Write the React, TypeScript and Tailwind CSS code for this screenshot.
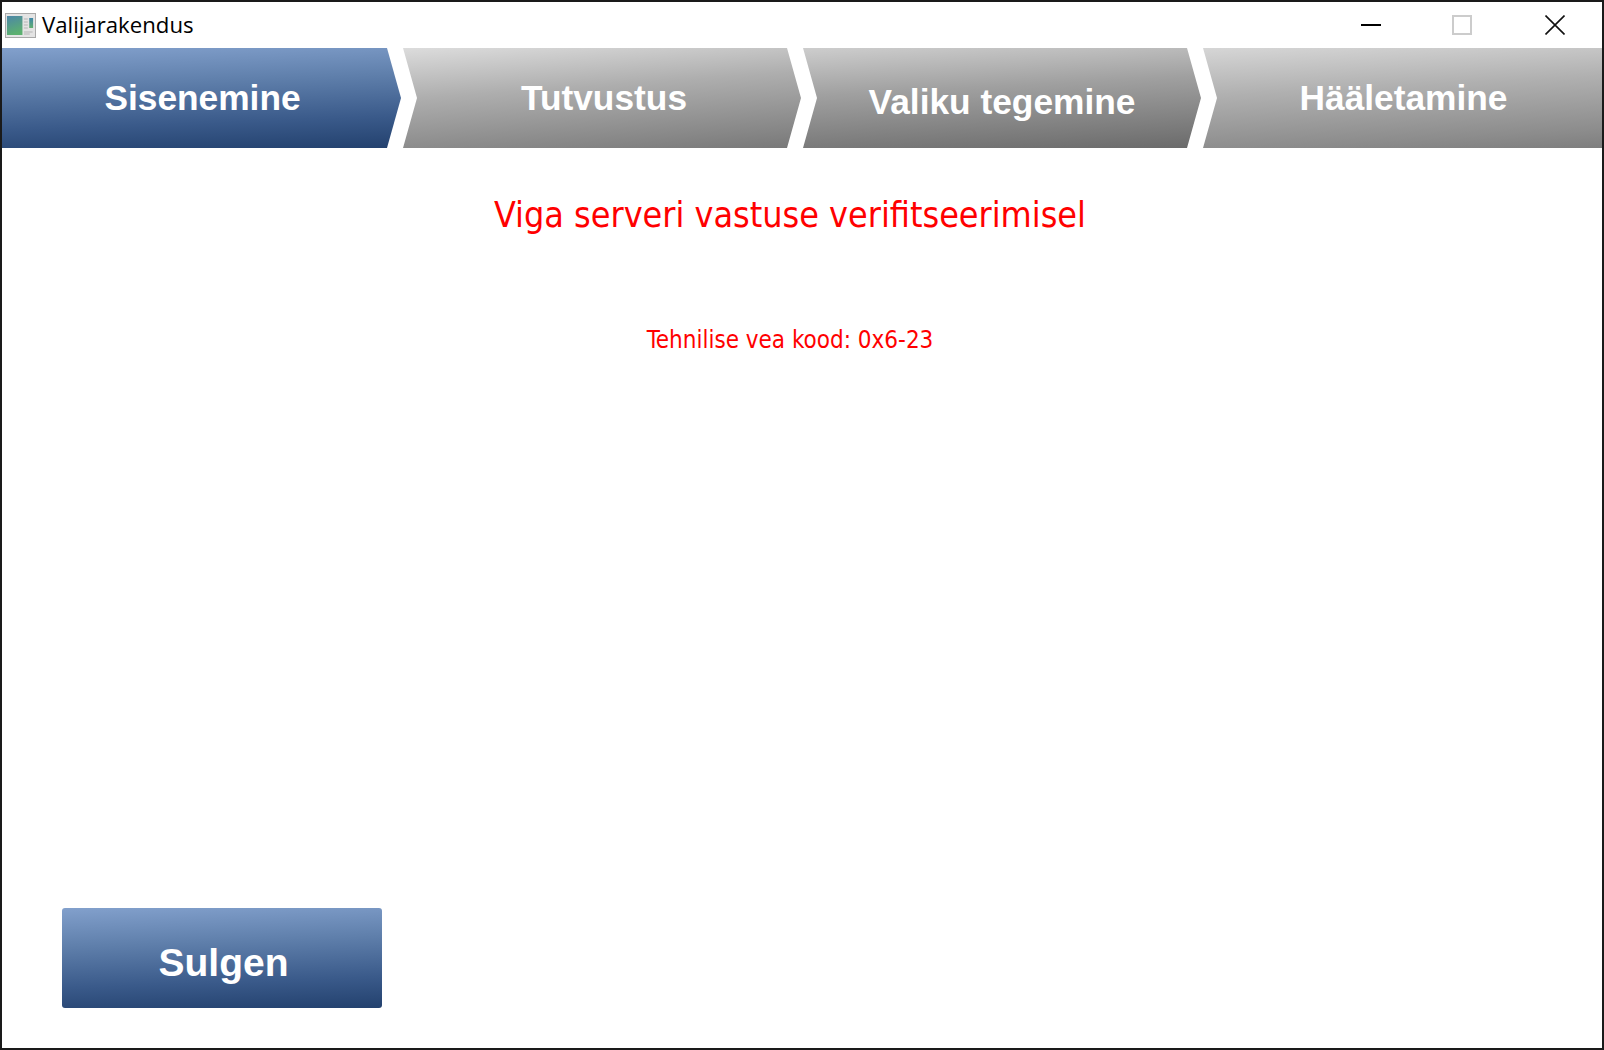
const BLUE = "bg-[linear-gradient(178deg,#82a0cc_0%,#5f7fab_35%,#3a5a8a_72%,#23416e_100%)]";

const AppIcon = () => (
  <svg width="31" height="25" viewBox="0 0 32 25" preserveAspectRatio="none" className="shrink-0">
    <rect x="0.5" y="0.5" width="31" height="24" fill="#e4e4e4" stroke="#a8a8a8" />
    <defs>
      <linearGradient id="pane" x1="0" y1="0" x2="0.3" y2="1">
        <stop offset="0" stopColor="#4c86a8" />
        <stop offset="1" stopColor="#5cb070" />
      </linearGradient>
      <linearGradient id="side" x1="0" y1="0" x2="0" y2="1">
        <stop offset="0" stopColor="#3f86a8" />
        <stop offset="1" stopColor="#62b070" />
      </linearGradient>
    </defs>
    <rect x="2" y="3" width="16" height="19" fill="url(#pane)" />
    <rect x="25" y="5" width="4" height="10" fill="url(#side)" />
    <path d="M19.5 6h4M19.5 9h4M19.5 12h4M19.5 15h4M19.5 19h9M19.5 21h6" stroke="#b4b4b4" strokeWidth="1" />
  </svg>
);

const TitleBar = () => (
  <div className="flex h-[46px] shrink-0 items-center pl-[3px]">
    <AppIcon />
    <span className="ml-[6px] font-['Open_Sans',sans-serif] text-[22.2px] leading-none text-black">
      Valijarakendus
    </span>
    <div className="ml-auto flex items-center pr-[37px]">
      <div className="h-[2px] w-5 bg-black" />
      <div className="ml-[71px] h-5 w-5 border-2 border-[#cccccc]" />
      <svg width="20" height="20" viewBox="0 0 20 20" className="ml-[73px]">
        <path d="M0.5 0.5L19.5 19.5M19.5 0.5L0.5 19.5" stroke="#111" strokeWidth="1.6" />
      </svg>
    </div>
  </div>
);

const Tabs = () => (
  <div className="flex h-[100px] shrink-0 gap-[2px] font-['Liberation_Sans',Arial,sans-serif] text-[35.3px] font-bold text-white">
    <div className={`flex w-[399px] items-center justify-center pl-[2px] ${BLUE} [clip-path:polygon(0_0,385px_0,399px_50%,385px_100%,0_100%)]`}>
      Sisenemine
    </div>
    <div className="flex w-[398px] items-center justify-center bg-[linear-gradient(176deg,#dcdcdc_0%,#aeaeae_40%,#868686_85%,#787878_100%)] pl-1 [clip-path:polygon(0_0,384px_0,398px_50%,384px_100%,0_100%,14px_50%)]">
      Tutvustus
    </div>
    <div className="flex w-[398px] items-center justify-center bg-[linear-gradient(177deg,#cdcdcd_0%,#a0a0a0_40%,#787878_85%,#6a6a6a_100%)] pt-2 [clip-path:polygon(0_0,384px_0,398px_50%,384px_100%,0_100%,14px_50%)]">
      Valiku tegemine
    </div>
    <div className="flex flex-1 items-center justify-center bg-[linear-gradient(177deg,#d6d6d6_0%,#b0b0b0_40%,#8c8c8c_85%,#7e7e7e_100%)] pl-[2px] [clip-path:polygon(0_0,100%_0,100%_100%,0_100%,14px_50%)]">
      Hääletamine
    </div>
  </div>
);

export default function App() {
  return (
    <div className="flex h-[1050px] w-[1604px] flex-col overflow-hidden border-2 border-[#1a1a1a] bg-white">
      <TitleBar />
      <Tabs />
      <div className="flex flex-col items-center pt-[46px] pr-6 font-['DejaVu_Sans',Verdana,sans-serif] text-[#ff0000] [font-stretch:condensed]">
        <h1 className="text-[35.6px] leading-[42px]">Viga serveri vastuse verifitseerimisel</h1>
        <p className="mt-[90px] text-[24px] leading-7">Tehnilise vea kood: 0x6-23</p>
      </div>
      <div className="mt-auto mb-[40px] ml-[60px]">
        <button className={`flex h-[100px] w-[320px] items-center justify-center rounded-[3px] pt-[10px] pl-[3px] font-['Liberation_Sans',Arial,sans-serif] text-[39px] font-bold text-white ${BLUE}`}>
          Sulgen
        </button>
      </div>
    </div>
  );
}
